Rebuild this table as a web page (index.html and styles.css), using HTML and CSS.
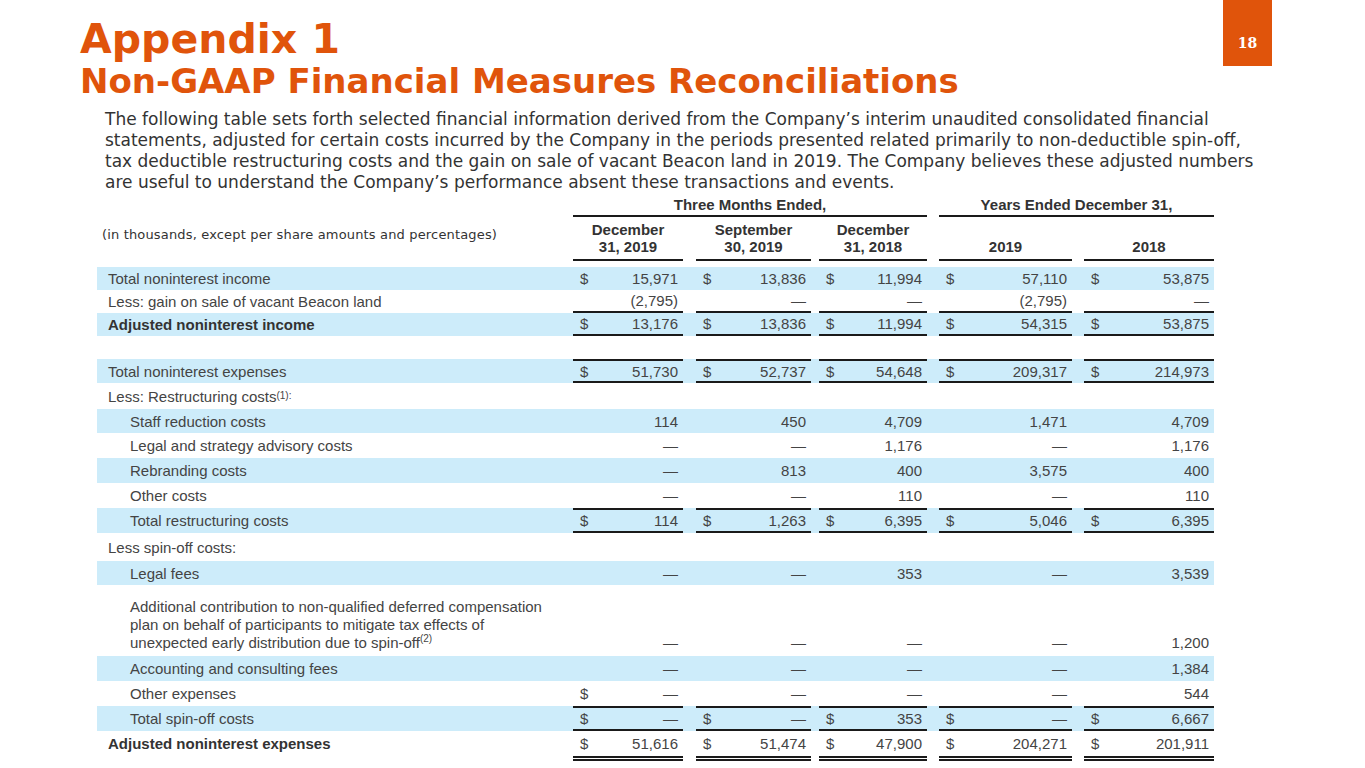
FILE: index.html
```html
<!DOCTYPE html>
<html lang="en">
<head>
<meta charset="utf-8">
<title>Appendix 1 - Non-GAAP Financial Measures Reconciliations</title>
<link rel="stylesheet" href="styles.css">
</head>
<body>
<div class="slide">
  <header class="top">
    <div class="titles">
      <h1 class="t1">Appendix 1</h1>
      <h2 class="t2">Non-GAAP Financial Measures Reconciliations</h2>
    </div>
    <div class="pagenum">18</div>
  </header>

  <p class="intro">The following table sets forth selected financial information derived from the Company’s interim unaudited consolidated financial<br>statements, adjusted for certain costs incurred by the Company in the periods presented related primarily to non-deductible spin-off,<br>tax deductible restructuring costs and the gain on sale of vacant Beacon land in 2019. The Company believes these adjusted numbers<br>are useful to understand the Company’s performance absent these transactions and events.</p>

  <div class="fin">
    <div class="r hdr1">
      <div class="lab"></div>
      <div class="grp g1">Three Months Ended,</div>
      <div class="grp g2">Years Ended December 31,</div>
    </div>
    <div class="r hdr2">
      <div class="lab note">(in thousands, except per share amounts and percentages)</div>
      <div class="ch"><span>December</span><span>31, 2019</span></div>
      <div class="ch"><span>September</span><span>30, 2019</span></div>
      <div class="ch"><span>December</span><span>31, 2018</span></div>
      <div class="ch"><span>2019</span></div>
      <div class="ch"><span>2018</span></div>
    </div>

    <div class="r bg h23">
      <div class="lab">Total noninterest income</div>
      <div class="v"><span class="d">$</span>15,971</div>
      <div class="v"><span class="d">$</span>13,836</div>
      <div class="v"><span class="d">$</span>11,994</div>
      <div class="v"><span class="d">$</span>57,110</div>
      <div class="v"><span class="d">$</span>53,875</div>
    </div>
    <div class="r h23 ul">
      <div class="lab">Less: gain on sale of vacant Beacon land</div>
      <div class="v">(2,795)</div>
      <div class="v">—</div>
      <div class="v">—</div>
      <div class="v">(2,795)</div>
      <div class="v">—</div>
    </div>
    <div class="r bg h23 ul">
      <div class="lab strong">Adjusted noninterest income</div>
      <div class="v"><span class="d">$</span>13,176</div>
      <div class="v"><span class="d">$</span>13,836</div>
      <div class="v"><span class="d">$</span>11,994</div>
      <div class="v"><span class="d">$</span>54,315</div>
      <div class="v"><span class="d">$</span>53,875</div>
    </div>
    <div class="r h23"></div>

    <div class="r bg h24 ol ul">
      <div class="lab">Total noninterest expenses</div>
      <div class="v"><span class="d">$</span>51,730</div>
      <div class="v"><span class="d">$</span>52,737</div>
      <div class="v"><span class="d">$</span>54,648</div>
      <div class="v"><span class="d">$</span>209,317</div>
      <div class="v"><span class="d">$</span>214,973</div>
    </div>
    <div class="r h26">
      <div class="lab">Less: Restructuring costs<sup>(1):</sup></div>
    </div>
    <div class="r bg h24">
      <div class="lab in">Staff reduction costs</div>
      <div class="v">114</div>
      <div class="v">450</div>
      <div class="v">4,709</div>
      <div class="v">1,471</div>
      <div class="v">4,709</div>
    </div>
    <div class="r">
      <div class="lab in">Legal and strategy advisory costs</div>
      <div class="v">—</div>
      <div class="v">—</div>
      <div class="v">1,176</div>
      <div class="v">—</div>
      <div class="v">1,176</div>
    </div>
    <div class="r bg">
      <div class="lab in">Rebranding costs</div>
      <div class="v">—</div>
      <div class="v">813</div>
      <div class="v">400</div>
      <div class="v">3,575</div>
      <div class="v">400</div>
    </div>
    <div class="r">
      <div class="lab in">Other costs</div>
      <div class="v">—</div>
      <div class="v">—</div>
      <div class="v">110</div>
      <div class="v">—</div>
      <div class="v">110</div>
    </div>
    <div class="r bg ol ul">
      <div class="lab in">Total restructuring costs</div>
      <div class="v"><span class="d">$</span>114</div>
      <div class="v"><span class="d">$</span>1,263</div>
      <div class="v"><span class="d">$</span>6,395</div>
      <div class="v"><span class="d">$</span>5,046</div>
      <div class="v"><span class="d">$</span>6,395</div>
    </div>
    <div class="r h28">
      <div class="lab">Less spin-off costs:</div>
    </div>
    <div class="r bg h24">
      <div class="lab in">Legal fees</div>
      <div class="v">—</div>
      <div class="v">—</div>
      <div class="v">353</div>
      <div class="v">—</div>
      <div class="v">3,539</div>
    </div>
    <div class="r tall">
      <div class="lab in multi">Additional contribution to non-qualified deferred compensation<br>plan on behalf of participants to mitigate tax effects of<br>unexpected early distribution due to spin-off<sup>(2)</sup></div>
      <div class="v">—</div>
      <div class="v">—</div>
      <div class="v">—</div>
      <div class="v">—</div>
      <div class="v">1,200</div>
    </div>
    <div class="r bg">
      <div class="lab in">Accounting and consulting fees</div>
      <div class="v">—</div>
      <div class="v">—</div>
      <div class="v">—</div>
      <div class="v">—</div>
      <div class="v">1,384</div>
    </div>
    <div class="r">
      <div class="lab in">Other expenses</div>
      <div class="v"><span class="d">$</span>—</div>
      <div class="v">—</div>
      <div class="v">—</div>
      <div class="v">—</div>
      <div class="v">544</div>
    </div>
    <div class="r bg ol ul">
      <div class="lab in">Total spin-off costs</div>
      <div class="v"><span class="d">$</span>—</div>
      <div class="v"><span class="d">$</span>—</div>
      <div class="v"><span class="d">$</span>353</div>
      <div class="v"><span class="d">$</span>—</div>
      <div class="v"><span class="d">$</span>6,667</div>
    </div>
    <div class="r dbl">
      <div class="lab strong">Adjusted noninterest expenses</div>
      <div class="v"><span class="d">$</span>51,616</div>
      <div class="v"><span class="d">$</span>51,474</div>
      <div class="v"><span class="d">$</span>47,900</div>
      <div class="v"><span class="d">$</span>204,271</div>
      <div class="v"><span class="d">$</span>201,911</div>
    </div>
  </div>
</div>
</body>
</html>
```

FILE: styles.css
```css
* { box-sizing: border-box; }

html, body {
  margin: 0;
  padding: 0;
  background: #ffffff;
}

.slide {
  width: 1365px;
  height: 768px;
  overflow: hidden;
  position: relative;
}

/* ---------- header ---------- */
.top {
  display: flex;
  justify-content: space-between;
  align-items: flex-start;
  padding: 0 93px 0 80px;
}

.t1, .t2 {
  margin: 0;
  font-family: "DejaVu Sans", Verdana, sans-serif;
  font-weight: bold;
  color: #e0540b;
  white-space: nowrap;
}

.t1 {
  font-size: 41px;
  line-height: 40px;
  margin-top: 19px;
}

.t2 {
  font-size: 34px;
  line-height: 40px;
  margin-top: 2px;
}

.pagenum {
  width: 49px;
  height: 66px;
  background: #e0540b;
  color: #ffffff;
  font-family: "DejaVu Serif", "Liberation Serif", serif;
  font-weight: bold;
  font-size: 14px;
  display: flex;
  align-items: flex-end;
  justify-content: center;
  padding-bottom: 15px;
}

/* ---------- intro ---------- */
.intro {
  margin: 8px 0 0 105px;
  width: 1255px;
  font-family: "DejaVu Sans", Verdana, sans-serif;
  font-size: 17px;
  line-height: 21px;
  color: #333333;
  white-space: nowrap;
}

/* ---------- table ---------- */
.fin {
  margin-left: 97px;
  width: 1117px;
  font-family: "Liberation Sans", Arial, sans-serif;
  font-size: 15px;
  color: #444444;
}

.r {
  display: grid;
  grid-template-columns: 476px 110px 128px 116px 145px 142px;
  height: 25px;
}

.r > :nth-child(3) { margin-left: 13px; }
.r > :nth-child(4) { margin-left: 8px; }
.r > :nth-child(5) { margin-left: 12px; }
.r > :nth-child(6) { margin-left: 12px; }

.h23 { height: 23px; }
.h24 { height: 24px; }
.h26 { height: 26px; }
.h28 { height: 28px; }
.tall { height: 71px; }

.bg { background: #cdecfa; }

.lab {
  display: flex;
  align-items: center;
  padding-left: 11px;
  white-space: nowrap;
}

.lab.in { padding-left: 33px; }

.lab.strong {
  font-weight: bold;
  color: #333333;
}

.lab.multi {
  display: block;
  line-height: 18px;
  padding-top: 13px;
}

sup {
  font-size: 10px;
  line-height: 0;
  vertical-align: 6px;
}

.v {
  display: flex;
  align-items: center;
  justify-content: flex-end;
  padding: 0 5px 0 7px;
  white-space: nowrap;
}

.v .d { margin-right: auto; }

.tall .v {
  align-items: flex-end;
  padding-bottom: 4px;
  line-height: 18px;
}

.ul .v { border-bottom: 2px solid #1a1a1a; }
.ol .v { border-top: 2px solid #1a1a1a; }
.dbl { height: 30px; }
.dbl .v { border-bottom: 5px double #1a1a1a; }
.dbl .lab { padding-bottom: 5px; }

/* header rows */
.hdr1 {
  height: 24px;
  font-weight: bold;
  color: #333333;
}

.grp {
  display: flex;
  align-items: center;
  justify-content: center;
  border-bottom: 2px solid #1a1a1a;
}

.hdr1 .g1 { grid-column: 2 / 5; }
.hdr1 .g2 { grid-column: 5 / 7; margin-left: 12px; }

.hdr2 {
  height: 44px;
  margin-bottom: 6px;
  font-weight: bold;
  color: #333333;
}

.note {
  align-items: flex-start;
  padding-left: 5px;
  padding-top: 9px;
  font-family: "DejaVu Sans", Verdana, sans-serif;
  font-size: 13px;
  letter-spacing: 0.16px;
  line-height: 17px;
  font-weight: normal;
  color: #333333;
}

.ch {
  display: flex;
  flex-direction: column;
  justify-content: flex-end;
  align-items: center;
  line-height: 17px;
  padding-bottom: 4px;
  border-bottom: 2px solid #1a1a1a;
}
```
